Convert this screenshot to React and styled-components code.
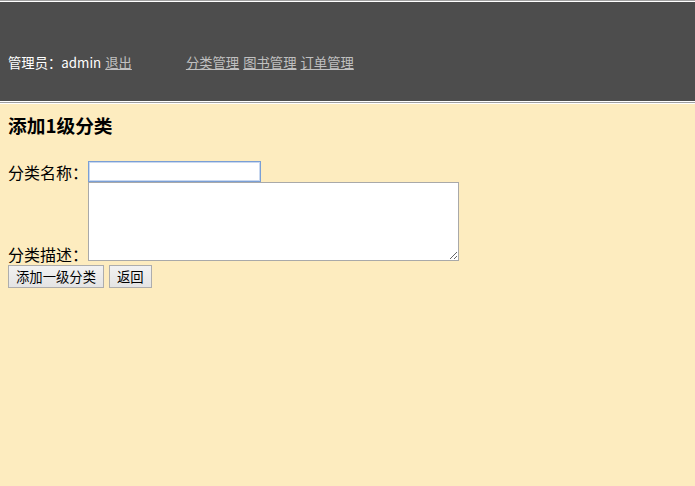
import React from "react"
import styled, { createGlobalStyle } from "styled-components"

const GlobalStyle = createGlobalStyle`
  html, body {
    margin: 0;
    padding: 0;
    height: 100%;
    background: #fdecbf;
  }
  body {
    font-family: "Noto Sans CJK SC", "Noto Sans", sans-serif;
  }
`

const Page = styled.div`
  min-height: 486px;
  background: #fdecbf;
`

// top frame with its frameset edges
const TopFrame = styled.div`
  border-top: 1px solid #a0a0a0;
  border-bottom: 1px solid #a0a0a0;
  background: #fff;
  padding: 1px 0;
`

const FrameEdge = styled.div`
  height: 1px;
  background: #fff;
`

const Header = styled.div`
  height: 99px;
  background: #4d4d4d;
  display: flex;
  align-items: center;
  padding: 22px 8px 0;
  box-sizing: border-box;
  font-size: 13.33px;
  color: #fff;
`

const User = styled.span`
  line-height: 18px;
`

const HeadLink = styled.a`
  color: #c0c0c0;
  text-decoration: underline;
  cursor: pointer;
  margin-left: ${(p) => p.$gap || 4}px;
`

const Content = styled.div`
  padding: 10px 8px 8px;
  color: #000;
`

const Title = styled.h3`
  margin: 0 0 25px;
  font-size: 18.72px;
  line-height: 22px;
  font-weight: bold;
`

const Row = styled.div`
  display: flex;
  align-items: ${(p) => (p.$bottom ? "flex-end" : "center")};
`

const Label = styled.label`
  width: 80px;
  font-size: 16px;
  line-height: 20px;
  margin-bottom: ${(p) => (p.$bottom ? "-3px" : "0")};
`

const NameInput = styled.input`
  width: 173px;
  height: 21px;
  box-sizing: border-box;
  border: 1px solid #7a9fd6;
  box-shadow: inset 0 0 0 1px #c9d8ef;
  outline: none;
  font-size: 13px;
  padding: 1px 2px;
  background: #fff;
`

const DescArea = styled.textarea`
  width: 371px;
  height: 79px;
  box-sizing: border-box;
  border: 1px solid #a9a9a9;
  font-size: 13px;
  padding: 2px;
  margin: 0;
  background: #fff;
`

const Buttons = styled.div`
  display: flex;
  gap: 5px;
  margin-top: 4px;
`

const Button = styled.button`
  height: 23px;
  padding: 0 7px;
  font-family: "Noto Sans CJK SC", sans-serif;
  font-size: 13.33px;
  line-height: 18px;
  color: #000;
  background: linear-gradient(#f2f2f2, #e4e4e4);
  border: 1px solid #adadad;
  border-radius: 0;
`

const App = () => {
  return (
    <Page>
      <GlobalStyle />
      <TopFrame>
        <Header>
          <User>管理员：admin</User>
          <HeadLink>退出</HeadLink>
          <HeadLink $gap={54}>分类管理</HeadLink>
          <HeadLink>图书管理</HeadLink>
          <HeadLink>订单管理</HeadLink>
        </Header>
      </TopFrame>
      <FrameEdge />
      <Content>
        <Title>添加1级分类</Title>
        <Row>
          <Label>分类名称：</Label>
          <NameInput type="text" />
        </Row>
        <Row $bottom>
          <Label $bottom>分类描述：</Label>
          <DescArea />
        </Row>
        <Buttons>
          <Button>添加一级分类</Button>
          <Button>返回</Button>
        </Buttons>
      </Content>
    </Page>
  )
}

export default App
